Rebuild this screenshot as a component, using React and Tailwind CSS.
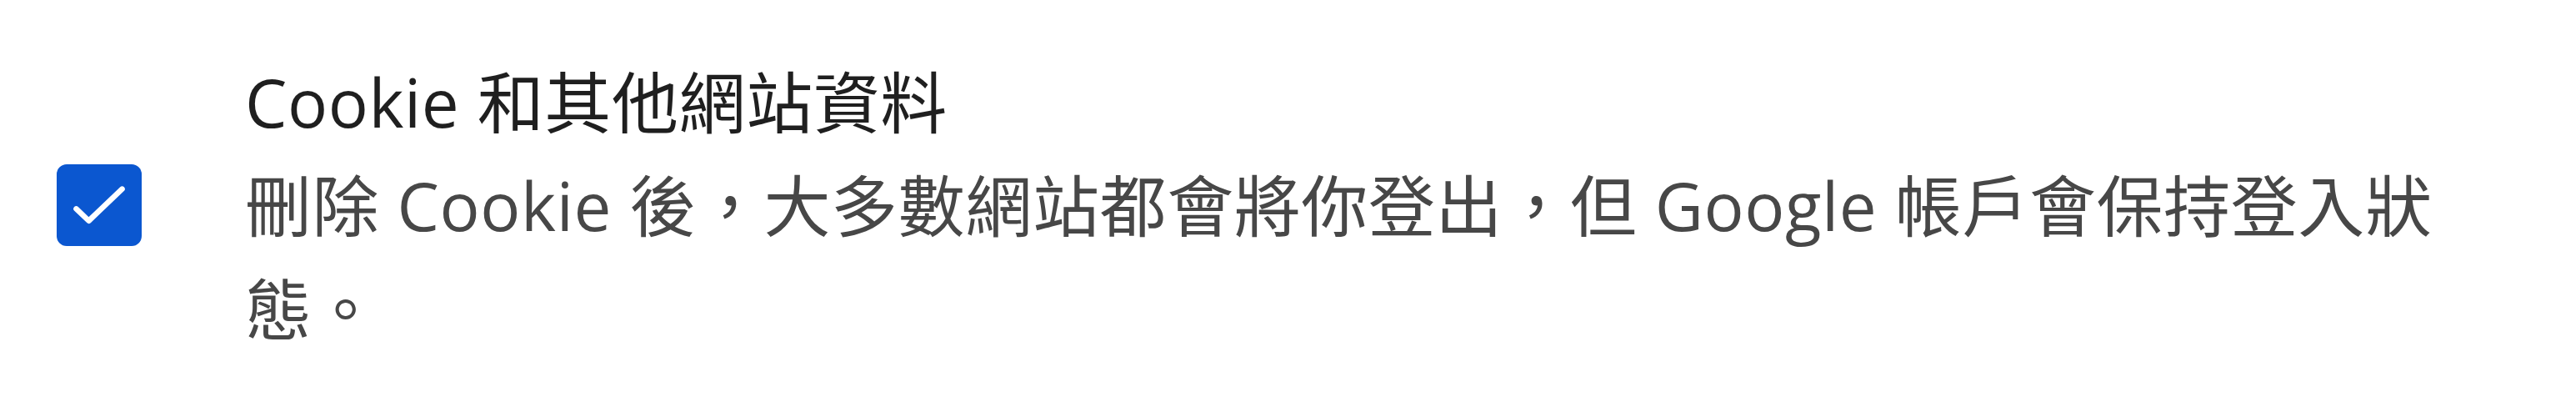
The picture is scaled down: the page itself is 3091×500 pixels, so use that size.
export default function App() {
  return (
    <div className="w-[3091px] h-[500px] bg-white">
      <div className="flex items-center pl-[68px] pt-[60px]">
        <div className="w-[102px] h-[98px] shrink-0 rounded-[12px] bg-[#0b57d0] flex items-center justify-center">
          <svg viewBox="0 0 16 16" className="w-[100px] h-[100px]">
            <path
              d="M3.6 8.7 L6.0 11.0 L12.4 4.9"
              fill="none"
              stroke="white"
              strokeWidth="1.05"
              strokeLinecap="round"
              strokeLinejoin="round"
            />
          </svg>
        </div>
        <div
          className="ml-[124px] w-[2680px] text-[80px] leading-[124px] tracking-[0.6px] font-normal"
          style={{ fontFamily: '"Open Sans", "Noto Sans CJK TC", sans-serif' }}
        >
          <div className="text-[#1f1f1f]">Cookie 和其他網站資料</div>
          <div className="text-[#474747]">
            刪除 Cookie 後，大多數網站都會將你登出，但 Google 帳戶會保持登入狀態。
          </div>
        </div>
      </div>
    </div>
  );
}
